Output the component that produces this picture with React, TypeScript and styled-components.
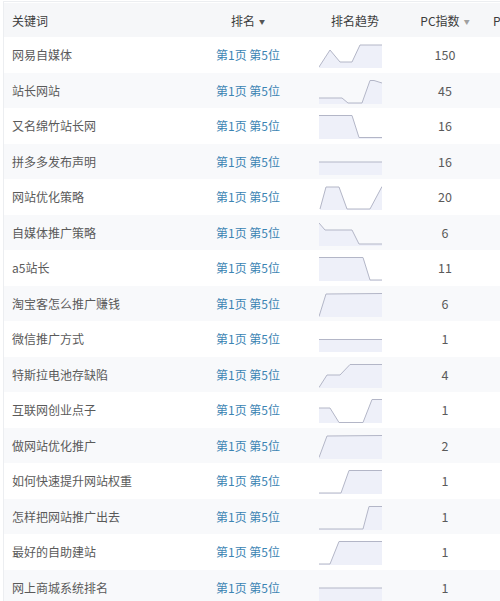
import React from "react";
import styled, { createGlobalStyle } from "styled-components";

const GlobalStyle = createGlobalStyle`
  html, body { margin: 0; padding: 0; background: #ffffff; }
  body { font-family: "Noto Sans CJK SC", "Noto Sans", sans-serif; font-size: 12px; overflow: hidden; }
`;

const Table = styled.div`
  margin: 1px 0 0 3px;
  border-top: 1px solid #eceef1;
  border-left: 1px solid #eceef1;
  padding-top: 1px;
  overflow: hidden;
`;

const cols = "186px 116px 98px 82px 1fr";

const HeaderRow = styled.div`
  display: grid;
  grid-template-columns: ${cols};
  height: 34px;
  background: #f6f7f9;
  color: #3c3c3c;
`;

const Row = styled.div<{ $alt: boolean }>`
  display: grid;
  grid-template-columns: ${cols};
  height: 35.5px;
  background: ${(p) => (p.$alt ? "#f8f9fb" : "#ffffff")};
  color: #5a5a5a;
`;

const Cell = styled.div<{ $align?: "left" | "center" }>`
  display: flex;
  align-items: center;
  justify-content: ${(p) => (p.$align === "center" ? "center" : "flex-start")};
  padding-left: ${(p) => (p.$align === "center" ? "0" : "8px")};
  white-space: nowrap;
  overflow: hidden;
`;

const LastCell = styled.div`
  display: flex;
  align-items: center;
  padding-left: 7px;
  white-space: nowrap;
  overflow: hidden;
`;

const TrendCell = styled.div`
  display: flex;
  align-items: flex-start;
  padding: 7px 0 0 13px;
`;

const RankText = styled.span`
  color: #3c84b3;
`;

const Caret = styled.span<{ $light?: boolean }>`
  margin-left: 4px;
  font-size: 6px;
  color: ${(p) => (p.$light ? "#a0a0a0" : "#555")};
  position: relative;
  top: 1px;
`;

const Num = styled.span`
  color: #5a5a5a;
  font-size: 12.5px;
`;

type Pt = [number, number];

const W = 63;
const H = 24;

const Spark: React.FC<{ pts: Pt[] }> = ({ pts }) => {
  const line = pts.map((p, i) => `${i ? "L" : "M"}${p[0]} ${p[1]}`).join(" ");
  const area = `${line} L${pts[pts.length - 1][0]} ${H} L${pts[0][0]} ${H} Z`;
  return (
    <svg width={W} height={H} viewBox={`0 0 ${W} ${H}`}>
      <path d={area} fill="#eef0f9" />
      <path d={line} fill="none" stroke="#b3b6c7" strokeWidth={1} />
    </svg>
  );
};

const data: { kw: string; pc: string; pts: Pt[] }[] = [
  { kw: "网易自媒体", pc: "150", pts: [[0, 23], [11, 6], [21, 18], [33, 18], [41, 1], [63, 1]] },
  { kw: "站长网站", pc: "45", pts: [[0, 18], [23, 18], [29, 23], [43, 23], [51, 0.5], [55, 0.5], [63, 3]] },
  { kw: "又名绵竹站长网", pc: "16", pts: [[0, 0.5], [33, 0.5], [40, 22.5], [63, 22.5]] },
  { kw: "拼多多发布声明", pc: "16", pts: [[0, 11], [63, 11]] },
  { kw: "网站优化策略", pc: "20", pts: [[1, 23], [7, 1], [20, 1], [28, 23], [51, 23], [63, 0.5]] },
  { kw: "自媒体推广策略", pc: "6", pts: [[0, 1], [6, 8], [33, 8], [40, 22], [63, 22]] },
  { kw: "a5站长", pc: "11", pts: [[0, 0.5], [44, 0.5], [51, 23], [63, 23]] },
  { kw: "淘宝客怎么推广赚钱", pc: "6", pts: [[0, 23.5], [7, 1], [63, 0.5]] },
  { kw: "微信推广方式", pc: "1", pts: [[0, 11.5], [63, 11.5]] },
  { kw: "特斯拉电池存缺陷", pc: "4", pts: [[0, 23.5], [8, 11], [21, 11], [31, 0.5], [63, 0.5]] },
  { kw: "互联网创业点子", pc: "1", pts: [[0, 9], [11, 9], [20, 23.5], [44, 23.5], [53, 0.5], [63, 0.5]] },
  { kw: "做网站优化推广", pc: "2", pts: [[0, 22.5], [8, 1], [63, 0.5]] },
  { kw: "如何快速提升网站权重", pc: "1", pts: [[0, 23], [22, 23], [30, 0.5], [63, 0.5]] },
  { kw: "怎样把网站推广出去", pc: "1", pts: [[0, 23], [44, 23], [50, 0.5], [63, 0.5]] },
  { kw: "最好的自助建站", pc: "1", pts: [[0, 23], [11, 23], [20, 0.5], [63, 0.5]] },
  { kw: "网上商城系统排名", pc: "1", pts: [[0, 11], [63, 11]] },
];

export default function App() {
  return (
    <>
      <GlobalStyle />
      <Table>
        <HeaderRow>
          <Cell>关键词</Cell>
          <Cell $align="center">
            排名<Caret>▼</Caret>
          </Cell>
          <Cell $align="center">排名趋势</Cell>
          <Cell $align="center">
            PC指数<Caret $light>▼</Caret>
          </Cell>
          <LastCell>P</LastCell>
        </HeaderRow>
        {data.map((d, i) => (
          <Row key={i} $alt={i % 2 === 1}>
            <Cell>{d.kw}</Cell>
            <Cell $align="center">
              <RankText>第1页 第5位</RankText>
            </Cell>
            <TrendCell>
              <Spark pts={d.pts} />
            </TrendCell>
            <Cell $align="center">
              <Num>{d.pc}</Num>
            </Cell>
            <LastCell />
          </Row>
        ))}
      </Table>
    </>
  );
}
